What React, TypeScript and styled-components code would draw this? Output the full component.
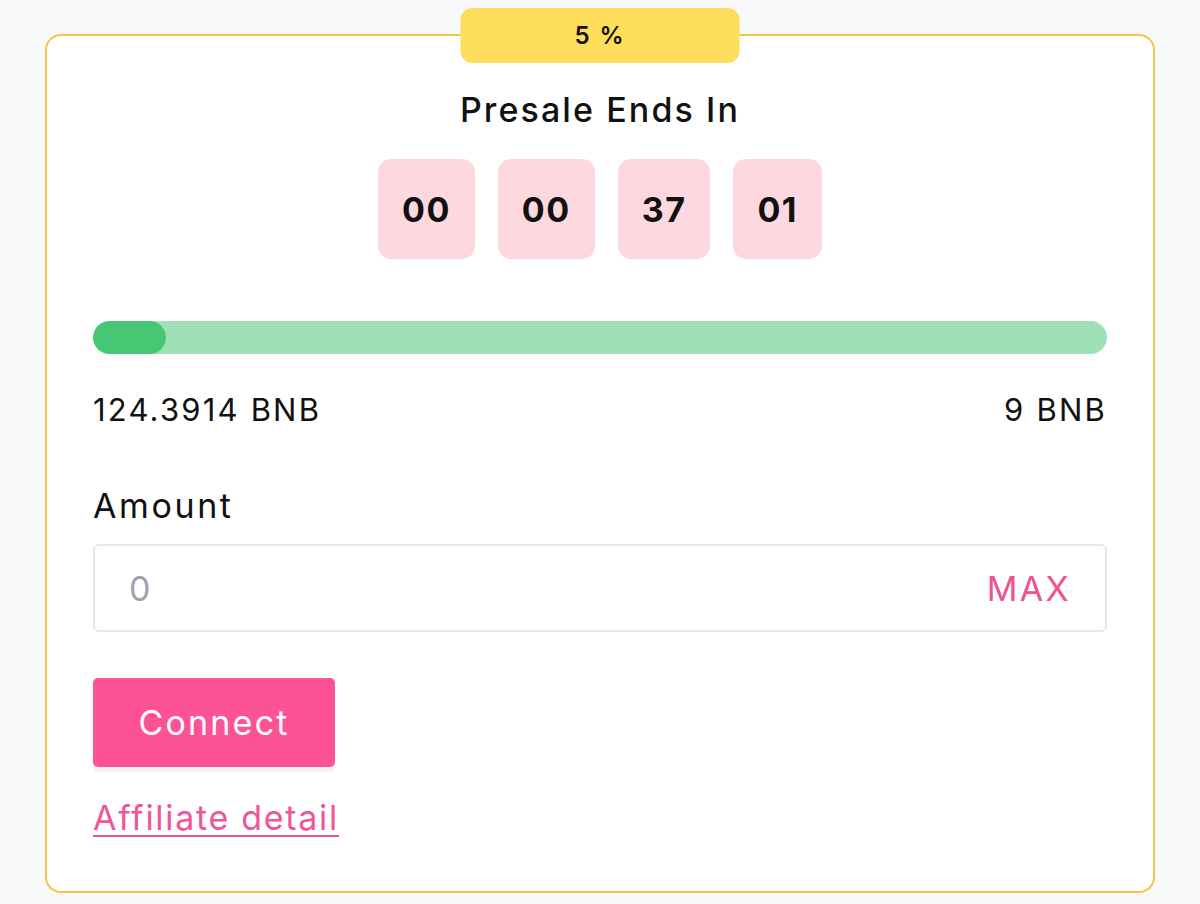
import React from "react";
import styled, { createGlobalStyle } from "styled-components";

const GlobalStyle = createGlobalStyle`
  html, body {
    margin: 0;
    padding: 0;
    background: #f8f9fb;
    font-family: Inter, "Noto Sans", sans-serif;
    color: #111111;
  }
`;

const countdown = ["00", "00", "37", "01"];
const raised = 124.3914;
const goal = 9;
const progress = 7.2;

function App(): JSX.Element {
  return (
    <Page>
      <GlobalStyle />
      <Card>
        <Badge>5 %</Badge>
        <Title>Presale Ends In</Title>
        <Timer>
          {countdown.map((v, i) => (
            <TimeBox key={i}>{v}</TimeBox>
          ))}
        </Timer>
        <Track>
          <Fill style={{ width: `${progress}%` }} />
        </Track>
        <Stats>
          <span>{raised} BNB</span>
          <span>{goal} BNB</span>
        </Stats>
        <Label>Amount</Label>
        <InputWrap>
          <AmountInput placeholder="0" />
          <MaxButton>MAX</MaxButton>
        </InputWrap>
        <ConnectButton>Connect</ConnectButton>
        <AffiliateLink href="#">Affiliate detail</AffiliateLink>
      </Card>
    </Page>
  );
}

const Page = styled.div`
  padding: 34px 45px 11px 45px;
`;

const Card = styled.div`
  position: relative;
  background: #ffffff;
  border: 2px solid #f3c445;
  border-radius: 16px;
  padding: 54px 46px 52px 46px;
  display: flex;
  flex-direction: column;
`;

const Badge = styled.div`
  position: absolute;
  top: -28px;
  left: 50%;
  transform: translateX(-50%);
  width: 279px;
  height: 55px;
  background: #fedd5a;
  border-radius: 12px;
  display: flex;
  align-items: center;
  justify-content: center;
  font-size: 24px;
  font-weight: 600;
  letter-spacing: 2px;
  color: #111111;
`;

const Title = styled.div`
  text-align: center;
  font-size: 34px;
  font-weight: 500;
  line-height: 40px;
  letter-spacing: 2.1px;
`;

const Timer = styled.div`
  display: flex;
  justify-content: center;
  gap: 23px;
  margin-top: 29px;
`;

const TimeBox = styled.div`
  height: 100px;
  padding: 0 24px;
  background: #fdd9df;
  border-radius: 13px;
  display: flex;
  align-items: center;
  justify-content: center;
  font-size: 34px;
  font-weight: 700;
  letter-spacing: 1.5px;
`;

const Track = styled.div`
  margin-top: 62px;
  height: 33px;
  border-radius: 17px;
  background: #9fe0b7;
  overflow: hidden;
`;

const Fill = styled.div`
  height: 100%;
  background: #47c774;
  border-radius: 17px;
`;

const Stats = styled.div`
  display: flex;
  justify-content: space-between;
  margin-top: 36px;
  font-size: 31px;
  line-height: 40px;
  letter-spacing: 2.2px;
`;

const Label = styled.div`
  margin-top: 56px;
  font-size: 34px;
  line-height: 40px;
  letter-spacing: 2.6px;
`;

const InputWrap = styled.div`
  margin-top: 18px;
  height: 88px;
  box-sizing: border-box;
  border: 2px solid #e5e7eb;
  border-radius: 6px;
  display: flex;
  align-items: center;
  padding: 0 34px;
`;

const AmountInput = styled.input`
  flex: 1;
  border: none;
  outline: none;
  background: transparent;
  font-family: inherit;
  font-size: 34px;
  color: #111111;
  padding: 0;
  &::placeholder {
    color: #9ca3af;
  }
`;

const MaxButton = styled.button`
  border: none;
  background: transparent;
  padding: 0;
  font-family: inherit;
  font-size: 34px;
  letter-spacing: 2.3px;
  color: #f0518f;
  cursor: pointer;
`;

const ConnectButton = styled.button`
  margin-top: 46px;
  align-self: flex-start;
  width: 242px;
  height: 89px;
  border: none;
  border-radius: 5px;
  background: #fd5396;
  color: #ffffff;
  font-family: inherit;
  font-size: 34px;
  letter-spacing: 2.2px;
  box-shadow: 0 5px 0 #f1f0f7;
  cursor: pointer;
`;

const AffiliateLink = styled.a`
  margin-top: 30px;
  align-self: flex-start;
  font-size: 34px;
  line-height: 42px;
  letter-spacing: 1.7px;
  color: #f0559a;
  text-decoration: underline;
  text-underline-offset: 5px;
  text-decoration-thickness: 2px;
`;

export default App;
